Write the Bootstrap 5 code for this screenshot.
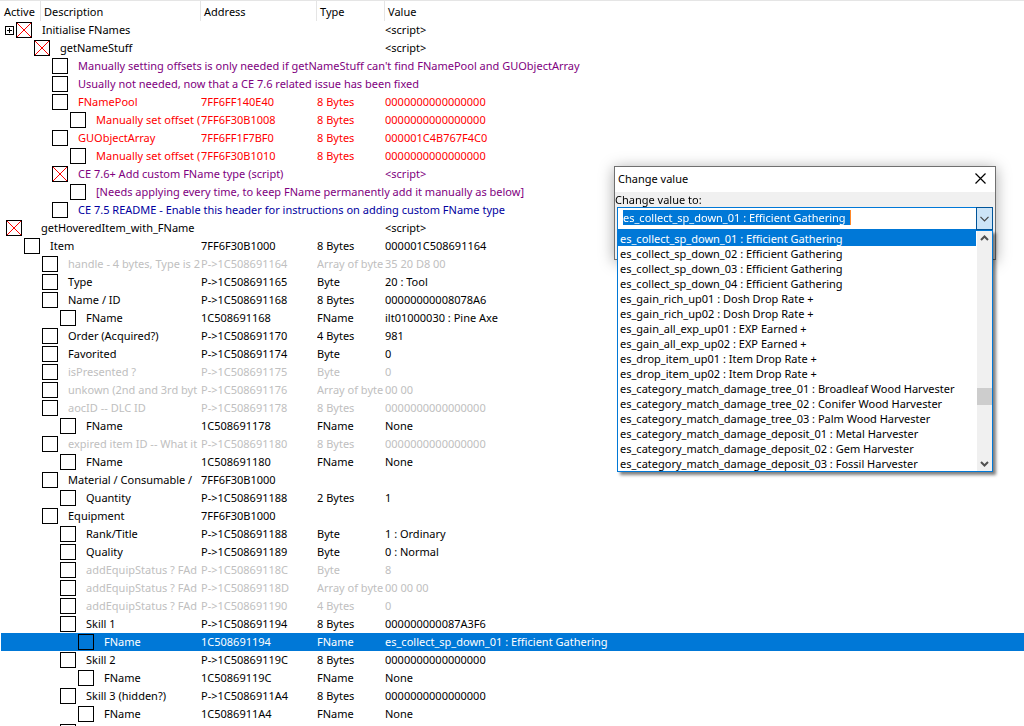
<!DOCTYPE html>
<html lang="en">
<head>
<meta charset="utf-8">
<meta name="viewport" content="width=device-width, initial-scale=1">
<title>Address list</title>
<link href="https://cdn.jsdelivr.net/npm/bootstrap@5.3.0/dist/css/bootstrap.min.css" rel="stylesheet">
<script src="https://cdn.jsdelivr.net/npm/bootstrap@5.3.0/dist/js/bootstrap.bundle.min.js"></script>
<style>
:root { --hl: #0078d7; }
body { font: 11px/16px "Noto Sans", "Open Sans", sans-serif; color: #000; background: #fff; }
.address-list { padding-left: 1px; border-top: 1px solid #e5e5e5; }
.tree-table { table-layout: fixed; border-collapse: separate; border-spacing: 0; }
.tree-table th { height: 20px; padding: 2px 0 0 3px; font-weight: 400; border-right: 1px solid #e5e5e5; white-space: nowrap; }
.tree-table th:last-child { border-right: 0; }
.tree-table td { height: 18px; padding: 0; white-space: nowrap; overflow: hidden; }
.c-active { width: 40px; } .c-desc { width: 160px; } .c-addr { width: 116px; } .c-type { width: 68px; }
.node { --lv: 0; height: 18px; padding-left: calc(var(--start) + var(--lv) * 18px); }
.group-a { --start: 15px; }
.group-b { --start: 5px; }
.lv1 { --lv: 1; } .lv2 { --lv: 2; } .lv3 { --lv: 3; } .lv4 { --lv: 4; }
.node.has-toggle { padding-left: 4px; }
.node.root .tick { margin-right: 19px; }
.tick { appearance: none; flex: none; width: 16px; height: 16px; margin: 0 10px 0 0; border: 1px solid #000; }
.tick:checked { background: linear-gradient(45deg, transparent 47%, #f00 47%, #f00 53%, transparent 53%), linear-gradient(-45deg, transparent 47%, #f00 47%, #f00 53%, transparent 53%); }
.toggle { width: 9px; height: 9px; margin: 1px 2px 0 0; padding: 0; border: 1px solid #000; background: #fff; }
.toggle svg, .tool svg { display: block; }
.violet { color: #800080; } .red { color: #f00; } .navy { color: #0000a0; } .dim { color: #c0c0c0; }
.picked { background: var(--hl); color: #fff; }
.change-window { top: 166px; right: 28px; width: 382px; height: 94px; background: #f0f0f0; border: 1px solid #707070; box-shadow: 0 2px 14px rgba(0,0,0,.35); }
.title-bar { height: 25px; padding: 0 0 2px 3px; background: #fff; }
.close-x { width: 30px; height: 23px; padding: 0; border: 0; background: none; }
.change-window label { line-height: 15px; }
.combo { margin: 0 2px; }
.combo-box { height: 23px; border: 1px solid var(--hl); background: #fff; }
.combo-text { height: 15px; width: 228px; margin: 2px 0 0 5px; padding: 0; border: 0; border-right: 1px solid #ff8728; background: var(--hl); color: #fff; font: inherit; line-height: 15px; outline: 0; }
.combo-arrow { width: 17px; height: 23px; margin: -1px -1px 0 0; padding: 0; border: 1px solid #005499; background: #cce4f7; }
.options { height: 242px; border: 1px solid var(--hl); background: #fff; box-shadow: 3px 3px 3px rgba(0,0,0,.5); }
.opt { display: block; width: 100%; height: 15px; padding: 0 0 0 2px; border: 0; background: #fff; color: #000; font: inherit; line-height: 15px; text-align: left; white-space: nowrap; }
.opt.picked { background: var(--hl); color: #fff; }
.track { width: 15px; margin-left: 1px; background: #f0f0f0; }
.thumb { height: 17px; background: #cdcdcd; }
</style>
</head>
<body>
<main class="address-list vh-100 overflow-hidden">
<table class="tree-table w-100">
<colgroup><col class="c-active"><col class="c-desc"><col class="c-addr"><col class="c-type"><col></colgroup>
<thead><tr><th scope="col">Active</th><th scope="col">Description</th><th scope="col">Address</th><th scope="col">Type</th><th scope="col">Value</th></tr></thead>
<tbody class="group-a">
<tr><td colspan="4"><label class="node has-toggle d-flex align-items-center"><button class="toggle" type="button" aria-label="Expand"><svg width="7" height="7" shape-rendering="crispEdges"><path d="M1 3h5v1H1zM3 1h1v5H3z"/></svg></button><input class="tick" type="checkbox" checked>Initialise FNames</label></td><td>&lt;script&gt;</td></tr>
<tr><td colspan="4"><label class="node lv1 d-flex align-items-center"><input class="tick" type="checkbox" checked>getNameStuff</label></td><td>&lt;script&gt;</td></tr>
<tr class="violet"><td colspan="5"><label class="node lv2 d-flex align-items-center"><input class="tick" type="checkbox">Manually setting offsets is only needed if getNameStuff can't find FNamePool and GUObjectArray</label></td></tr>
<tr class="violet"><td colspan="5"><label class="node lv2 d-flex align-items-center"><input class="tick" type="checkbox">Usually not needed, now that a CE 7.6 related issue has been fixed</label></td></tr>
<tr class="red"><td colspan="2"><label class="node lv2 d-flex align-items-center"><input class="tick" type="checkbox">FNamePool</label></td><td>7FF6FF140E40</td><td>8 Bytes</td><td>0000000000000000</td></tr>
<tr class="red"><td colspan="2"><label class="node lv3 d-flex align-items-center"><input class="tick" type="checkbox">Manually set offset (</label></td><td>7FF6F30B1008</td><td>8 Bytes</td><td>0000000000000000</td></tr>
<tr class="red"><td colspan="2"><label class="node lv2 d-flex align-items-center"><input class="tick" type="checkbox">GUObjectArray</label></td><td>7FF6FF1F7BF0</td><td>8 Bytes</td><td>000001C4B767F4C0</td></tr>
<tr class="red"><td colspan="2"><label class="node lv3 d-flex align-items-center"><input class="tick" type="checkbox">Manually set offset (</label></td><td>7FF6F30B1010</td><td>8 Bytes</td><td>0000000000000000</td></tr>
<tr class="violet"><td colspan="4"><label class="node lv2 d-flex align-items-center"><input class="tick" type="checkbox" checked>CE 7.6+ Add custom FName type (script)</label></td><td>&lt;script&gt;</td></tr>
<tr class="violet"><td colspan="5"><label class="node lv3 d-flex align-items-center"><input class="tick" type="checkbox">[Needs applying every time, to keep FName permanently add it manually as below]</label></td></tr>
<tr class="navy"><td colspan="5"><label class="node lv2 d-flex align-items-center"><input class="tick" type="checkbox">CE 7.5 README - Enable this header for instructions on adding custom FName type</label></td></tr>
</tbody>
<tbody class="group-b">
<tr><td colspan="4"><label class="node root d-flex align-items-center"><input class="tick" type="checkbox" checked>getHoveredItem_with_FName</label></td><td>&lt;script&gt;</td></tr>
<tr><td colspan="2"><label class="node lv1 d-flex align-items-center"><input class="tick" type="checkbox">Item</label></td><td>7FF6F30B1000</td><td>8 Bytes</td><td>000001C508691164</td></tr>
<tr class="dim"><td colspan="2"><label class="node lv2 d-flex align-items-center"><input class="tick" type="checkbox">handle - 4 bytes, Type is 2</label></td><td>P-&gt;1C508691164</td><td>Array of byte</td><td>35 20 D8 00</td></tr>
<tr><td colspan="2"><label class="node lv2 d-flex align-items-center"><input class="tick" type="checkbox">Type</label></td><td>P-&gt;1C508691165</td><td>Byte</td><td>20 : Tool</td></tr>
<tr><td colspan="2"><label class="node lv2 d-flex align-items-center"><input class="tick" type="checkbox">Name / ID</label></td><td>P-&gt;1C508691168</td><td>8 Bytes</td><td>00000000008078A6</td></tr>
<tr><td colspan="2"><label class="node lv3 d-flex align-items-center"><input class="tick" type="checkbox">FName</label></td><td>1C508691168</td><td>FName</td><td>ilt01000030 : Pine Axe</td></tr>
<tr><td colspan="2"><label class="node lv2 d-flex align-items-center"><input class="tick" type="checkbox">Order (Acquired?)</label></td><td>P-&gt;1C508691170</td><td>4 Bytes</td><td>981</td></tr>
<tr><td colspan="2"><label class="node lv2 d-flex align-items-center"><input class="tick" type="checkbox">Favorited</label></td><td>P-&gt;1C508691174</td><td>Byte</td><td>0</td></tr>
<tr class="dim"><td colspan="2"><label class="node lv2 d-flex align-items-center"><input class="tick" type="checkbox">isPresented ?</label></td><td>P-&gt;1C508691175</td><td>Byte</td><td>0</td></tr>
<tr class="dim"><td colspan="2"><label class="node lv2 d-flex align-items-center"><input class="tick" type="checkbox">unkown (2nd and 3rd byt</label></td><td>P-&gt;1C508691176</td><td>Array of byte</td><td>00 00</td></tr>
<tr class="dim"><td colspan="2"><label class="node lv2 d-flex align-items-center"><input class="tick" type="checkbox">aocID -- DLC ID</label></td><td>P-&gt;1C508691178</td><td>8 Bytes</td><td>0000000000000000</td></tr>
<tr><td colspan="2"><label class="node lv3 d-flex align-items-center"><input class="tick" type="checkbox">FName</label></td><td>1C508691178</td><td>FName</td><td>None</td></tr>
<tr class="dim"><td colspan="2"><label class="node lv2 d-flex align-items-center"><input class="tick" type="checkbox">expired item ID -- What it</label></td><td>P-&gt;1C508691180</td><td>8 Bytes</td><td>0000000000000000</td></tr>
<tr><td colspan="2"><label class="node lv3 d-flex align-items-center"><input class="tick" type="checkbox">FName</label></td><td>1C508691180</td><td>FName</td><td>None</td></tr>
<tr><td colspan="2"><label class="node lv2 d-flex align-items-center"><input class="tick" type="checkbox">Material / Consumable /</label></td><td>7FF6F30B1000</td><td></td><td></td></tr>
<tr><td colspan="2"><label class="node lv3 d-flex align-items-center"><input class="tick" type="checkbox">Quantity</label></td><td>P-&gt;1C508691188</td><td>2 Bytes</td><td>1</td></tr>
<tr><td colspan="2"><label class="node lv2 d-flex align-items-center"><input class="tick" type="checkbox">Equipment</label></td><td>7FF6F30B1000</td><td></td><td></td></tr>
<tr><td colspan="2"><label class="node lv3 d-flex align-items-center"><input class="tick" type="checkbox">Rank/Title</label></td><td>P-&gt;1C508691188</td><td>Byte</td><td>1 : Ordinary</td></tr>
<tr><td colspan="2"><label class="node lv3 d-flex align-items-center"><input class="tick" type="checkbox">Quality</label></td><td>P-&gt;1C508691189</td><td>Byte</td><td>0 : Normal</td></tr>
<tr class="dim"><td colspan="2"><label class="node lv3 d-flex align-items-center"><input class="tick" type="checkbox">addEquipStatus ? FAd</label></td><td>P-&gt;1C50869118C</td><td>Byte</td><td>8</td></tr>
<tr class="dim"><td colspan="2"><label class="node lv3 d-flex align-items-center"><input class="tick" type="checkbox">addEquipStatus ? FAd</label></td><td>P-&gt;1C50869118D</td><td>Array of byte</td><td>00 00 00</td></tr>
<tr class="dim"><td colspan="2"><label class="node lv3 d-flex align-items-center"><input class="tick" type="checkbox">addEquipStatus ? FAd</label></td><td>P-&gt;1C508691190</td><td>4 Bytes</td><td>0</td></tr>
<tr><td colspan="2"><label class="node lv3 d-flex align-items-center"><input class="tick" type="checkbox">Skill 1</label></td><td>P-&gt;1C508691194</td><td>8 Bytes</td><td>000000000087A3F6</td></tr>
<tr class="picked"><td colspan="2"><label class="node lv4 d-flex align-items-center"><input class="tick" type="checkbox">FName</label></td><td>1C508691194</td><td>FName</td><td>es_collect_sp_down_01 : Efficient Gathering</td></tr>
<tr><td colspan="2"><label class="node lv3 d-flex align-items-center"><input class="tick" type="checkbox">Skill 2</label></td><td>P-&gt;1C50869119C</td><td>8 Bytes</td><td>0000000000000000</td></tr>
<tr><td colspan="2"><label class="node lv4 d-flex align-items-center"><input class="tick" type="checkbox">FName</label></td><td>1C50869119C</td><td>FName</td><td>None</td></tr>
<tr><td colspan="2"><label class="node lv3 d-flex align-items-center"><input class="tick" type="checkbox">Skill 3 (hidden?)</label></td><td>P-&gt;1C5086911A4</td><td>8 Bytes</td><td>0000000000000000</td></tr>
<tr><td colspan="2"><label class="node lv4 d-flex align-items-center"><input class="tick" type="checkbox">FName</label></td><td>1C5086911A4</td><td>FName</td><td>None</td></tr>
<tr><td colspan="5"><div class="node lv3 d-flex align-items-center"><input class="tick" type="checkbox" aria-label="Active"></div></td></tr>
</tbody>
</table>
</main>

<section class="change-window position-fixed" role="dialog" aria-labelledby="win-title">
  <div class="title-bar d-flex align-items-center justify-content-between">
    <span id="win-title">Change value</span>
    <button class="close-x tool d-flex align-items-center justify-content-center" type="button" aria-label="Close"><svg width="11" height="11" viewBox="0 0 11 11" stroke="#000" stroke-width="1.2"><path d="M.5.5l10 10M10.500.5l-10 10"/></svg></button>
  </div>
  <label class="d-block" for="new-value">Change value to:</label>
  <div class="combo">
    <div class="combo-box d-flex justify-content-between">
      <input class="combo-text" id="new-value" type="text" value="es_collect_sp_down_01 : Efficient Gathering">
      <button class="combo-arrow tool d-flex align-items-center justify-content-center" type="button" aria-label="Show options"><svg width="9" height="6" viewBox="0 0 9 6" fill="none" stroke="#444" stroke-width="1.2"><path d="M.5.8l4 4 4-4"/></svg></button>
    </div>
    <div class="options d-flex">
      <div class="flex-grow-1" role="listbox" aria-label="Values">
        <button class="opt picked" type="button" role="option" aria-selected="true">es_collect_sp_down_01 : Efficient Gathering</button>
        <button class="opt" type="button" role="option">es_collect_sp_down_02 : Efficient Gathering</button>
        <button class="opt" type="button" role="option">es_collect_sp_down_03 : Efficient Gathering</button>
        <button class="opt" type="button" role="option">es_collect_sp_down_04 : Efficient Gathering</button>
        <button class="opt" type="button" role="option">es_gain_rich_up01 : Dosh Drop Rate +</button>
        <button class="opt" type="button" role="option">es_gain_rich_up02 : Dosh Drop Rate +</button>
        <button class="opt" type="button" role="option">es_gain_all_exp_up01 : EXP Earned +</button>
        <button class="opt" type="button" role="option">es_gain_all_exp_up02 : EXP Earned +</button>
        <button class="opt" type="button" role="option">es_drop_item_up01 : Item Drop Rate +</button>
        <button class="opt" type="button" role="option">es_drop_item_up02 : Item Drop Rate +</button>
        <button class="opt" type="button" role="option">es_category_match_damage_tree_01 : Broadleaf Wood Harvester</button>
        <button class="opt" type="button" role="option">es_category_match_damage_tree_02 : Conifer Wood Harvester</button>
        <button class="opt" type="button" role="option">es_category_match_damage_tree_03 : Palm Wood Harvester</button>
        <button class="opt" type="button" role="option">es_category_match_damage_deposit_01 : Metal Harvester</button>
        <button class="opt" type="button" role="option">es_category_match_damage_deposit_02 : Gem Harvester</button>
        <button class="opt" type="button" role="option">es_category_match_damage_deposit_03 : Fossil Harvester</button>
      </div>
      <div class="track tool d-flex flex-column align-items-center">
        <svg class="my-1" width="9" height="6" viewBox="0 0 9 6" fill="none" stroke="#505050" stroke-width="2"><path d="M1 5l3.500-3.500L8 5"/></svg>
        <div class="flex-grow-1 d-flex flex-column w-100"><div class="flex-grow-1"></div><div class="flex-grow-1"></div><div class="flex-grow-1"></div><div class="thumb"></div><div class="flex-grow-1"></div></div>
        <svg class="mt-2 mb-1" width="9" height="6" viewBox="0 0 9 6" fill="none" stroke="#505050" stroke-width="2"><path d="M1 1l3.500 3.500L8 1"/></svg>
      </div>
    </div>
  </div>
</section>
</body>
</html>
